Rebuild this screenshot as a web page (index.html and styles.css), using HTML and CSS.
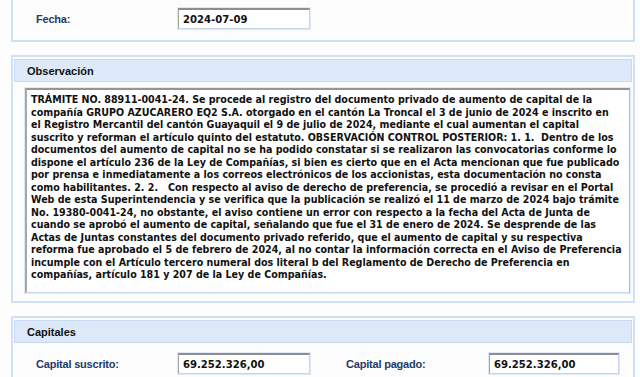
FILE: index.html
```html
<!DOCTYPE html>
<html lang="es">
<head>
    <meta charset="UTF-8">
    <meta name="viewport" content="width=device-width, initial-scale=1.0">
    <title>Trámite</title>
    <link rel="stylesheet" href="styles.css">
</head>
<body>
    <div class="page">
        <div class="panel panel-top">
            <div class="form-row">
                <label class="field-label" for="fecha">Fecha:</label>
                <input id="fecha" class="field-input" type="text" value="2024-07-09" readonly>
            </div>
        </div>

        <div class="panel">
            <div class="panel-head">Observación</div>
            <div class="obs-box">TRÁMITE NO. 88911-0041-24. Se procede al registro del documento privado de aumento de capital de la
compañía GRUPO AZUCARERO EQ2 S.A. otorgado en el cantón La Troncal el 3 de junio de 2024 e inscrito en
el Registro Mercantil del cantón Guayaquil el 9 de julio de 2024, mediante el cual aumentan el capital
suscrito y reforman el artículo quinto del estatuto. OBSERVACIÓN CONTROL POSTERIOR: 1. 1.  Dentro de los
documentos del aumento de capital no se ha podido constatar si se realizaron las convocatorias conforme lo
dispone el artículo 236 de la Ley de Compañías, si bien es cierto que en el Acta mencionan que fue publicado
por prensa e inmediatamente a los correos electrónicos de los accionistas, esta documentación no consta
como habilitantes. 2. 2.   Con respecto al aviso de derecho de preferencia, se procedió a revisar en el Portal
Web de esta Superintendencia y se verifica que la publicación se realizó el 11 de marzo de 2024 bajo trámite
No. 19380-0041-24, no obstante, el aviso contiene un error con respecto a la fecha del Acta de Junta de
cuando se aprobó el aumento de capital, señalando que fue el 31 de enero de 2024. Se desprende de las
Actas de Juntas constantes del documento privado referido, que el aumento de capital y su respectiva
reforma fue aprobado el 5 de febrero de 2024, al no contar la información correcta en el Aviso de Preferencia
incumple con el Artículo tercero numeral dos literal b del Reglamento de Derecho de Preferencia en
compañías, artículo 181 y 207 de la Ley de Compañías.</div>
        </div>

        <div class="panel">
            <div class="panel-head">Capitales</div>
            <div class="form-row form-row-capital">
                <label class="field-label" for="suscrito">Capital suscrito:</label>
                <input id="suscrito" class="field-input" type="text" value="69.252.326,00" readonly>
                <label class="field-label" for="pagado">Capital pagado:</label>
                <input id="pagado" class="field-input field-input-short" type="text" value="69.252.326,00" readonly>
            </div>
        </div>
    </div>
</body>
</html>
```

FILE: styles.css
```css
body {
    margin: 0;
    background: #fdfdfd;
    font-family: "Liberation Sans", Arial, sans-serif;
    color: #222;
}

.page {
    padding: 0 5px 0 11px;
}

.panel {
    border: 2px solid #d0e1f7;
    padding: 2px 1px 8px;
    background: #fcfcfc;
    margin-bottom: 13px;
}

.panel-top {
    border-top: none;
    padding-top: 8px;
    padding-bottom: 11px;
}

.panel-head {
    height: 23px;
    box-sizing: border-box;
    border: 1px solid #c8dbf3;
    background: #dde8f9;
    padding-left: 12px;
    line-height: 22px;
    font-size: 11px;
    font-weight: bold;
    color: #111;
}

.form-row {
    display: grid;
    grid-template-columns: 142px 168px 143px 130px;
    align-items: center;
    padding-left: 22px;
}

.form-row-capital {
    margin-top: 10px;
}

.field-label {
    font-size: 11px;
    font-weight: bold;
    letter-spacing: -0.2px;
    color: #253967;
}

.field-input {
    width: 132px;
    height: 21px;
    box-sizing: border-box;
    margin: 0;
    padding: 0 4px;
    border-top: 2px solid #8e8e8e;
    border-left: 1px solid #a4a4a4;
    border-right: 1px solid #c4d6ee;
    border-bottom: 1px solid #c4d6ee;
    box-shadow: 0 0 0 1px #dde9f8;
    background: #fff;
    font-family: "DejaVu Sans Condensed", "DejaVu Sans", sans-serif;
    font-stretch: condensed;
    font-size: 11.2px;
    font-weight: bold;
    color: #111;
    outline: none;
}

.field-input-short {
    width: 130px;
}

.obs-box {
    margin: 6px 2px 0 11px;
    height: 205px;
    box-sizing: border-box;
    padding: 3px 4px;
    border-top: 2px solid #959595;
    border-left: 2px solid #a8a8a8;
    border-right: 1px solid #bdbdbd;
    border-bottom: 1px solid #c9d8ec;
    box-shadow: 0 0 0 1px #dde9f8;
    background: #fff;
    white-space: pre;
    overflow: hidden;
    font-family: "DejaVu Sans Condensed", "DejaVu Sans", sans-serif;
    font-stretch: condensed;
    font-size: 10.6px;
    line-height: 12.5px;
    font-weight: bold;
    color: #111;
}
```
